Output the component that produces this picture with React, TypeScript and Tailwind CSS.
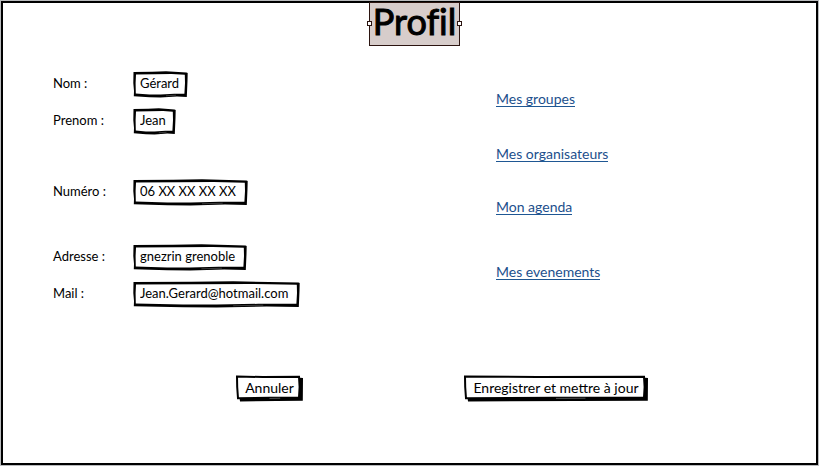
function BoxFrame({ w }: { w: number }) {
  return (
    <svg
      className="pointer-events-none absolute inset-0 h-full w-full"
      viewBox={`0 0 ${w} 27`}
      preserveAspectRatio="none"
      aria-hidden="true"
    >
      <path
        d={`M0.5 1 L${w * 0.35} 0.8 L${w * 0.6} 0.3 L${w - 1.5} 1.4 L${w - 0.3} 2 L${w - 0.5} 10 L${w - 1.2} 26 L${w * 0.8} 25.6 L${w * 0.5} 26.6 L${w * 0.3} 26.2 L0.8 25.3 L1 20 L0.3 12 Z`}
        fill="#000"
      />
      <path
        d={`M3 3.6 L${w * 0.4} 3.2 L${w * 0.7} 3 L${w - 3.2} 3.8 L${w - 3} 12 L${w - 3.6} 22.8 L${w * 0.75} 22.8 L${w * 0.5} 23.6 L${w * 0.3} 23.4 L2.8 22.6 L2.6 12 Z`}
        fill="#fff"
      />
      <path
        d={`M${w * 0.6} 24.8 L${w * 0.78} 24.2`}
        stroke="#777"
        strokeWidth="0.5"
        fill="none"
      />
    </svg>
  );
}

function ButtonFrame({ w }: { w: number }) {
  return (
    <svg
      className="pointer-events-none absolute inset-0 h-full w-full"
      viewBox={`0 0 ${w} 27`}
      preserveAspectRatio="none"
      aria-hidden="true"
    >
      <path
        d={`M${w - 3} 2.8 L${w} 3 L${w - 0.2} 25.8 L${w * 0.6} 26 L4 26.6 L3.6 23 L${w - 4} 22 Z`}
        fill="#000"
      />
      <path
        d={`M1 1.6 L${w * 0.4} 2 L${w - 4} 1.8 L${w - 3.4} 12 L${w - 4} 22.6 L${w * 0.5} 22.8 L2 23.2 L1.2 12 Z`}
        fill="#fff"
        stroke="#000"
        strokeWidth="2"
      />
      <path d={`M${w * 0.5} 23.4 L${w * 0.66} 23.2`} stroke="#888" strokeWidth="0.6" />
    </svg>
  );
}

type FieldProps = {
  id: string;
  label: string;
  value: string;
  width: string;
  w: number;
  type?: string;
};

function Field({ id, label, value, width, w, type = "text" }: FieldProps) {
  return (
    <div className="flex h-[27px] items-center">
      <label htmlFor={id} className="w-20 shrink-0 pb-px">
        {label} :
      </label>
      <div className={`relative h-[27px] ${width}`}>
        <BoxFrame w={w} />
        <input
          id={id}
          type={type}
          defaultValue={value}
          className="relative block h-full w-full bg-transparent pb-[3px] pl-[7px] outline-none"
        />
      </div>
    </div>
  );
}

function SketchButton({ label, width, w }: { label: string; width: string; w: number }) {
  return (
    <button type="button" className={`relative h-[27px] pb-[3px] whitespace-nowrap ${width}`}>
      <ButtonFrame w={w} />
      <span className="relative">{label}</span>
    </button>
  );
}

function ProfileLink({ label }: { label: string }) {
  return (
    <a href="#" className="block border-b border-[#1f5793] pt-[2px] leading-[14px] text-[#1c4f8c]">
      {label}
    </a>
  );
}

export default function App() {
  return (
    <div className="min-h-screen border border-[#b9bbbd] bg-white font-['Lato','Open_Sans',sans-serif] text-[13px] text-black">
      <main className="min-h-[464px] border-2 border-black">
        <header className="flex justify-center pl-[10px]">
          <h1 className="relative -mt-px h-[44px] w-[91px] border border-[#2b1410] bg-[#d7cdcb] text-center text-[36px] leading-9 [font-variant-ligatures:none] [-webkit-text-stroke:1px_black]">
            Profil
            <span className="absolute top-[18px] -left-[3px] size-[5px] border border-[#2b1410] bg-white" />
            <span className="absolute top-[18px] -right-[3px] size-[5px] border border-[#2b1410] bg-white" />
          </h1>
        </header>

        <form className="pt-[25px] pl-[50px]">
          <div className="flex">
            <div className="flex w-[443px] shrink-0 flex-col">
              <div className="flex flex-col gap-[10px]">
                <Field id="nom" label="Nom" value="Gérard" width="w-[55px]" w={55} />
                <Field id="prenom" label="Prenom" value="Jean" width="w-[43px]" w={43} />
              </div>
              <div className="pt-11">
                <Field id="numero" label="Numéro" value="06 XX XX XX XX" width="w-[115px]" w={115} type="tel" />
              </div>
              <div className="flex flex-col gap-[10px] pt-[38px]">
                <Field id="adresse" label="Adresse" value="gnezrin grenoble" width="w-[114px]" w={114} />
                <Field id="mail" label="Mail" value="Jean.Gerard@hotmail.com" width="w-[167px]" w={167} type="email" />
              </div>
            </div>
            <nav className="flex flex-col items-start pt-[19px] text-[14px]">
              <ProfileLink label="Mes groupes" />
              <div className="pt-[38px]">
                <ProfileLink label="Mes organisateurs" />
              </div>
              <div className="pt-9">
                <ProfileLink label="Mon agenda" />
              </div>
              <div className="pt-12">
                <ProfileLink label="Mes evenements" />
              </div>
            </nav>
          </div>
          <div className="flex gap-[161px] pt-[67px] pl-[183px] text-[14px]">
            <SketchButton label="Annuler" width="w-[67px]" w={67} />
            <SketchButton label="Enregistrer et mettre à jour" width="w-[184px]" w={184} />
          </div>
        </form>
      </main>
    </div>
  );
}
